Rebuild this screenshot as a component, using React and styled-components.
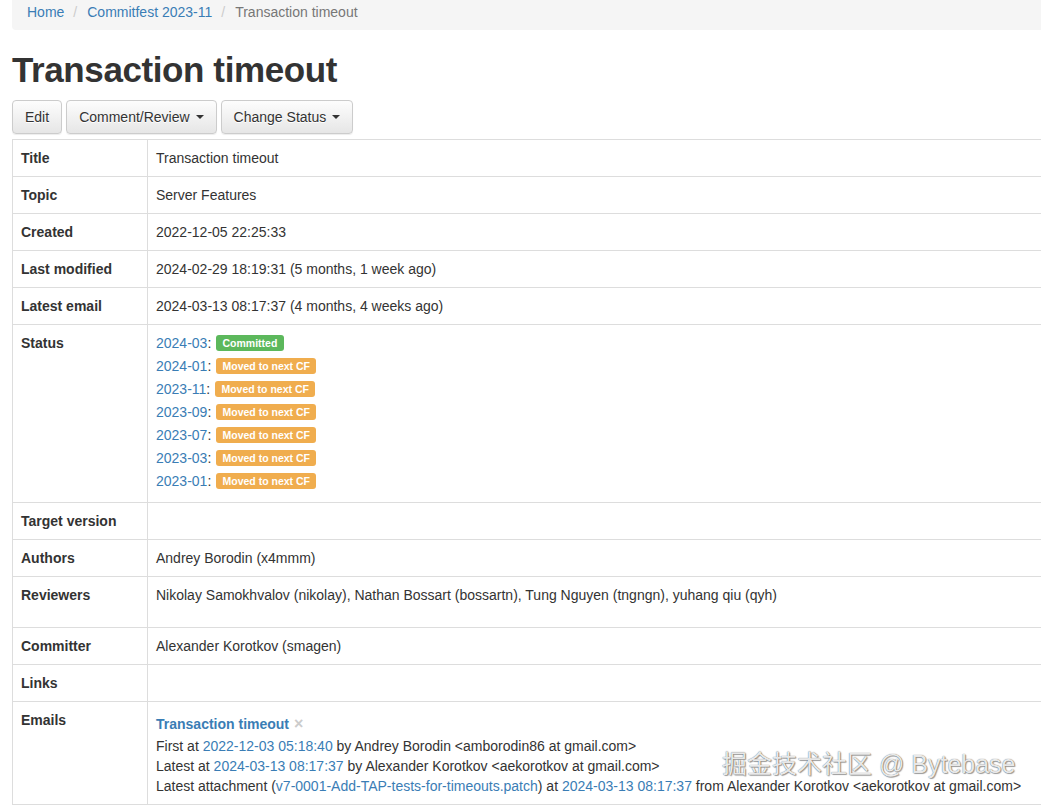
import React from "react";
import styled, { createGlobalStyle } from "styled-components";

const GlobalStyle = createGlobalStyle`
  html, body {
    margin: 0;
    padding: 0;
    overflow: hidden;
    background: #fff;
  }
  body {
    font-family: "Liberation Sans", Helvetica, Arial, sans-serif;
    font-size: 14px;
    line-height: 20px;
    color: #333;
  }
  * {
    box-sizing: border-box;
  }
`;

const Page = styled.div`
  position: relative;
  width: 1200px;
  padding-left: 12px;
`;

const Breadcrumb = styled.ol`
  display: flex;
  list-style: none;
  margin: -6px 0 20px;
  padding: 8px 15px;
  background: #f5f5f5;
  border-radius: 4px;
`;

const Crumb = styled.li`
  color: ${({ $active }) => ($active ? "#777" : "inherit")};
  &:not(:first-child)::before {
    content: "/";
    padding: 0 10px 0 9px;
    color: #ccc;
  }
`;

const Link = styled.a`
  color: #3a7db5;
  text-decoration: none;
  font-weight: ${({ $bold }) => ($bold ? 700 : "inherit")};
`;

const Heading = styled.h1`
  font-size: 35px;
  font-weight: 700;
  letter-spacing: -0.4px;
  line-height: 39.6px;
  margin: 20px 0 10px;
  color: #333;
`;

const Toolbar = styled.div`
  display: flex;
  gap: 4px;
  margin-bottom: 5px;
`;

const Button = styled.button`
  display: inline-flex;
  align-items: center;
  gap: 6px;
  padding: 6px 12px;
  font-family: inherit;
  font-size: 14px;
  line-height: 20px;
  color: #333;
  border: 1px solid #ccc;
  border-radius: 4px;
  background: linear-gradient(to bottom, #fdfdfd 0%, #e6e6e6 100%);
  box-shadow: inset 0 1px 0 rgba(255, 255, 255, 0.15),
    0 1px 1px rgba(0, 0, 0, 0.075);
  text-shadow: 0 1px 0 #fff;
  cursor: pointer;
`;

const Caret = styled.span`
  display: inline-block;
  width: 0;
  height: 0;
  border-top: 4px solid #333;
  border-left: 4px solid transparent;
  border-right: 4px solid transparent;
`;

const Table = styled.table`
  width: 1180px;
  border-collapse: collapse;
  border-spacing: 0;
`;

const Label = styled.th`
  width: 135px;
  padding: 8px;
  text-align: left;
  vertical-align: top;
  font-weight: 700;
  border: 1px solid #ddd;
`;

const Value = styled.td`
  padding: 8px 8px ${({ $extra }) => 8 + ($extra || 0)}px;
  vertical-align: top;
  border: 1px solid #ddd;
  white-space: nowrap;
`;

const StatusLine = styled.div`
  padding-bottom: 3px;
`;

const Badge = styled.span`
  display: inline-block;
  margin-left: 1px;
  padding: 2.5px 6.3px 2.5px;
  font-size: 10.5px;
  font-weight: 700;
  line-height: 1;
  color: #fff;
  border-radius: 3px;
  vertical-align: 1px;
  background: ${({ $kind }) => ($kind === "committed" ? "#5cb85c" : "#f0ad4e")};
`;

const ThreadTitle = styled.div`
  margin: 4px 0 2px;
`;

const Dismiss = styled.span`
  margin-left: 5px;
  font-size: 16px;
  font-weight: 700;
  color: #ccc;
`;

const Watermark = styled.div`
  position: absolute;
  left: 722px;
  top: 753px;
  font-family: "Liberation Sans", "Noto Sans CJK SC", sans-serif;
  font-size: 25px;
  line-height: 34px;
  color: rgba(255, 255, 255, 0.9);
  text-shadow: 0 0 1px rgba(0, 0, 0, 0.7), 1px 1px 1px rgba(0, 0, 0, 0.35);
  white-space: nowrap;
  pointer-events: none;
`;

const statuses = [
  ["2024-03", "committed", "Committed"],
  ["2024-01", "moved", "Moved to next CF"],
  ["2023-11", "moved", "Moved to next CF"],
  ["2023-09", "moved", "Moved to next CF"],
  ["2023-07", "moved", "Moved to next CF"],
  ["2023-03", "moved", "Moved to next CF"],
  ["2023-01", "moved", "Moved to next CF"],
];

const App = () => {
  return (
    <Page>
      <GlobalStyle />
      <Breadcrumb>
        <Crumb>
          <Link href="#">Home</Link>
        </Crumb>
        <Crumb>
          <Link href="#">Commitfest 2023-11</Link>
        </Crumb>
        <Crumb $active>Transaction timeout</Crumb>
      </Breadcrumb>

      <Heading>Transaction timeout</Heading>

      <Toolbar>
        <Button>Edit</Button>
        <Button>
          Comment/Review <Caret />
        </Button>
        <Button>
          Change Status <Caret />
        </Button>
      </Toolbar>

      <Table>
        <tbody>
          <tr>
            <Label>Title</Label>
            <Value>Transaction timeout</Value>
          </tr>
          <tr>
            <Label>Topic</Label>
            <Value>Server Features</Value>
          </tr>
          <tr>
            <Label>Created</Label>
            <Value>2022-12-05 22:25:33</Value>
          </tr>
          <tr>
            <Label>Last modified</Label>
            <Value>2024-02-29 18:19:31 (5 months, 1 week ago)</Value>
          </tr>
          <tr>
            <Label>Latest email</Label>
            <Value>2024-03-13 08:17:37 (4 months, 4 weeks ago)</Value>
          </tr>
          <tr>
            <Label>Status</Label>
            <Value>
              {statuses.map(([cf, kind, text]) => (
                <StatusLine key={cf}>
                  <Link href="#">{cf}</Link>: <Badge $kind={kind}>{text}</Badge>
                </StatusLine>
              ))}
            </Value>
          </tr>
          <tr>
            <Label>Target version</Label>
            <Value />
          </tr>
          <tr>
            <Label>Authors</Label>
            <Value>Andrey Borodin (x4mmm)</Value>
          </tr>
          <tr>
            <Label>Reviewers</Label>
            <Value $extra={14}>
              Nikolay Samokhvalov (nikolay), Nathan Bossart (bossartn), Tung
              Nguyen (tngngn), yuhang qiu (qyh)
            </Value>
          </tr>
          <tr>
            <Label>Committer</Label>
            <Value>Alexander Korotkov (smagen)</Value>
          </tr>
          <tr>
            <Label>Links</Label>
            <Value />
          </tr>
          <tr>
            <Label>Emails</Label>
            <Value>
              <ThreadTitle>
                <Link href="#" $bold>
                  Transaction timeout
                </Link>
                <Dismiss>×</Dismiss>
              </ThreadTitle>
              <div>
                First at <Link href="#">2022-12-03 05:18:40</Link> by Andrey
                Borodin &lt;amborodin86 at gmail.com&gt;
              </div>
              <div>
                Latest at <Link href="#">2024-03-13 08:17:37</Link> by Alexander
                Korotkov &lt;aekorotkov at gmail.com&gt;
              </div>
              <div>
                Latest attachment (
                <Link href="#">v7-0001-Add-TAP-tests-for-timeouts.patch</Link>)
                at <Link href="#">2024-03-13 08:17:37</Link> from Alexander
                Korotkov &lt;aekorotkov at gmail.com&gt;
              </div>
            </Value>
          </tr>
        </tbody>
      </Table>

      <Watermark>掘金技术社区 @ Bytebase</Watermark>
    </Page>
  );
};

export default App;
